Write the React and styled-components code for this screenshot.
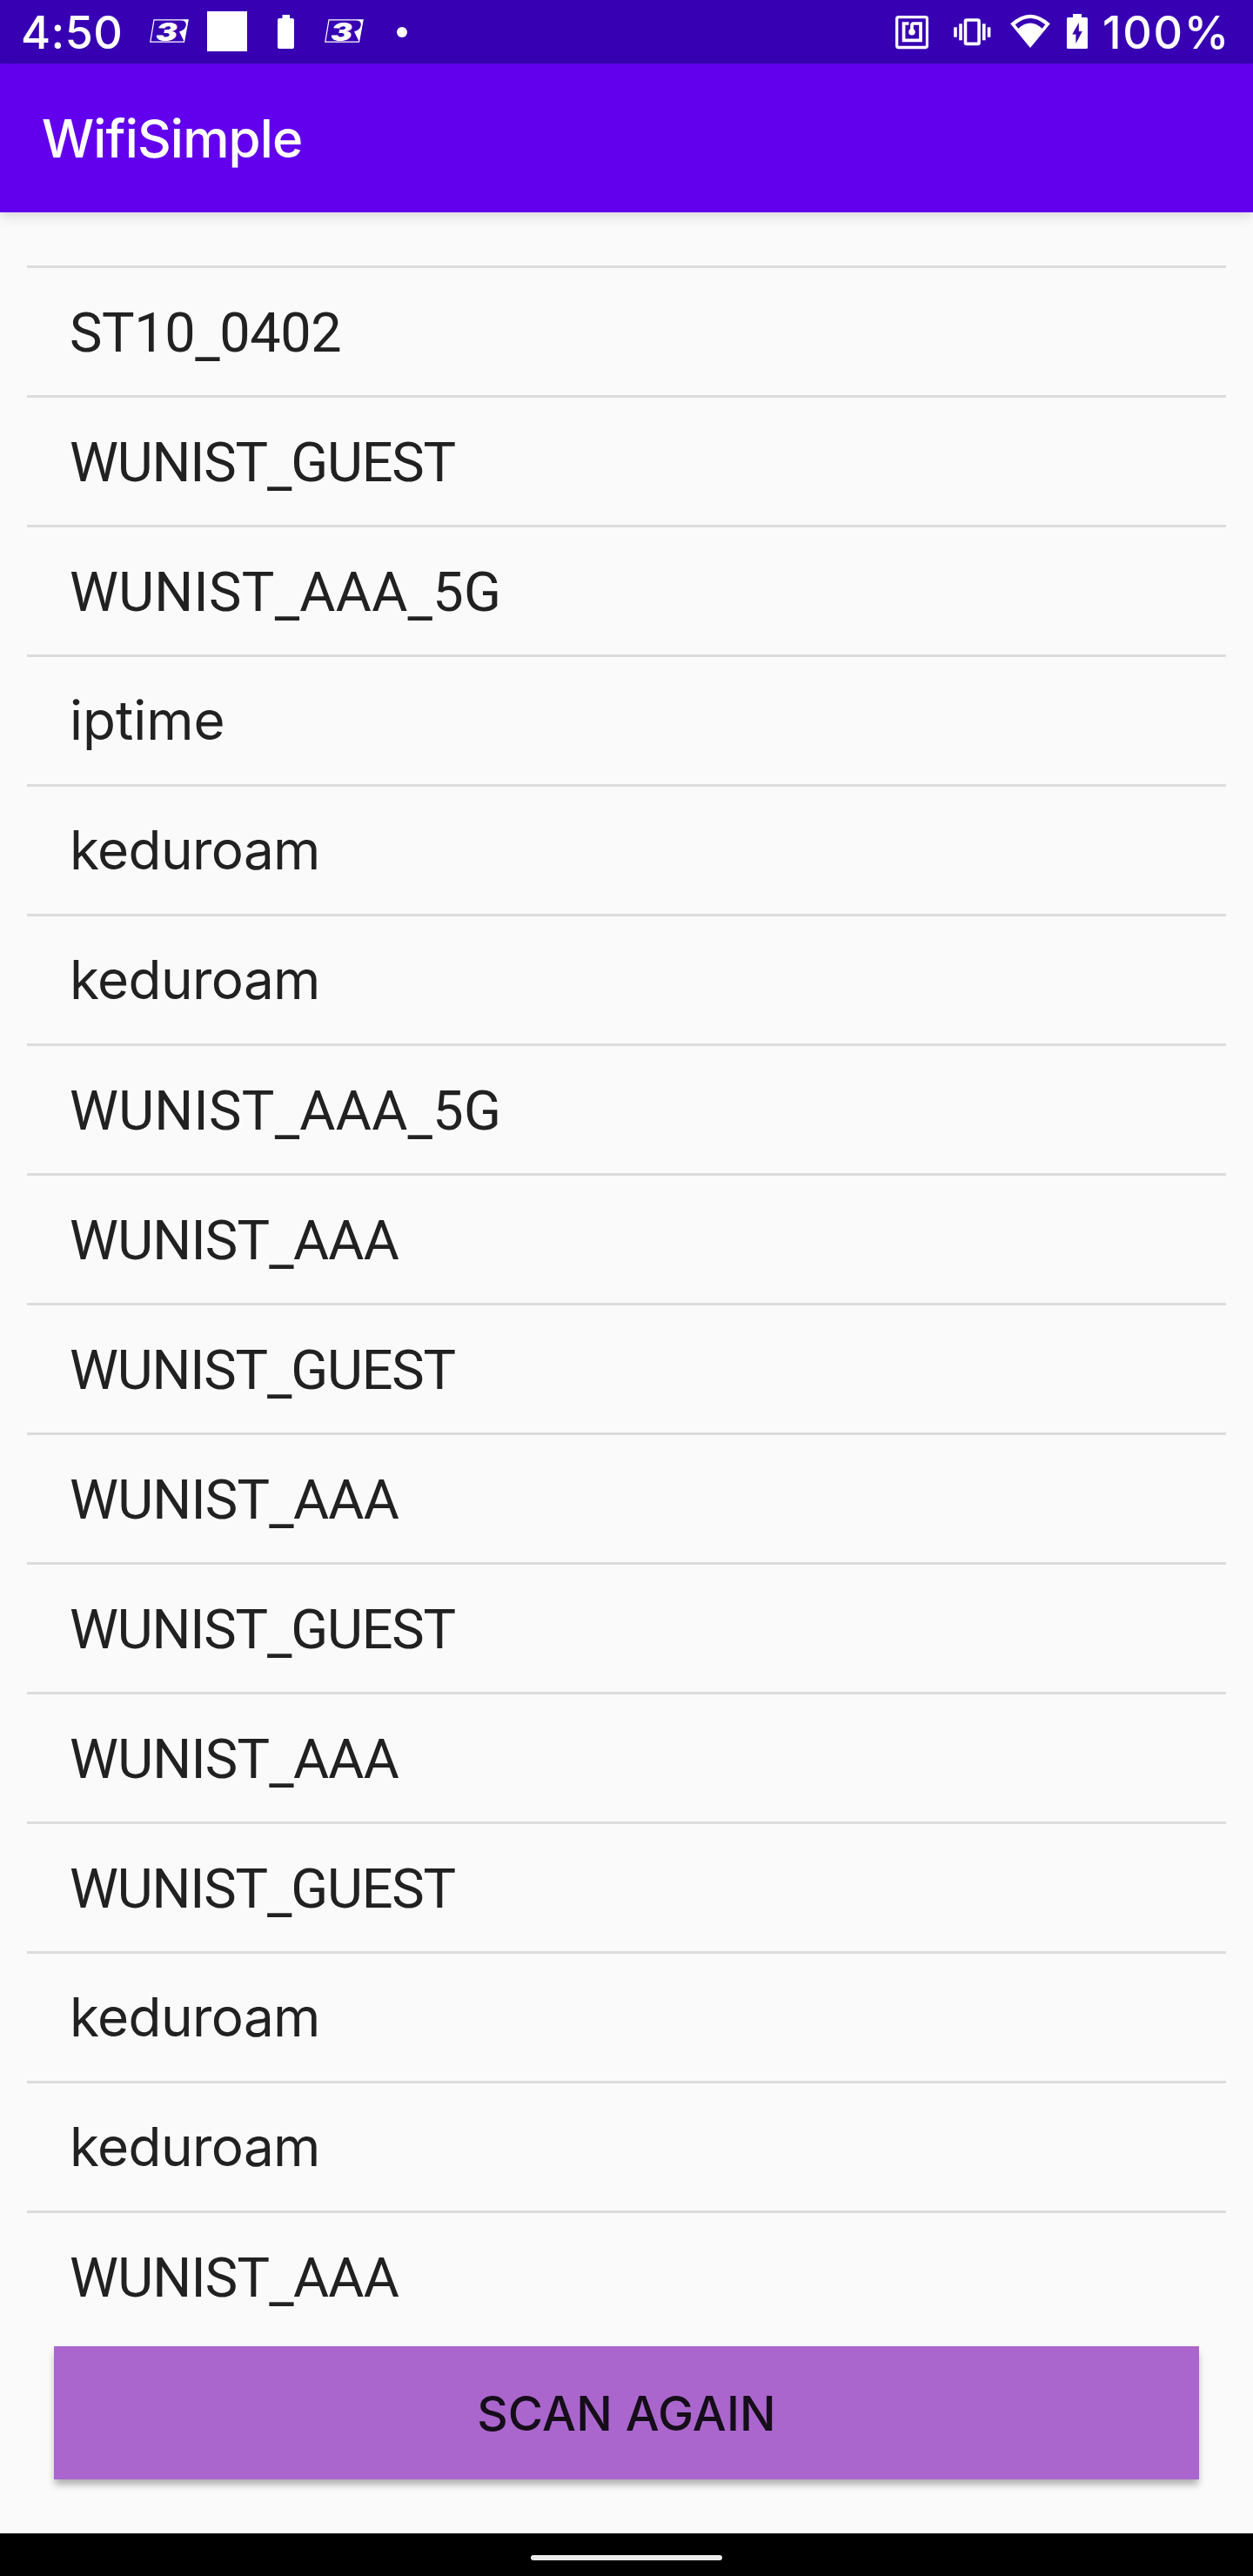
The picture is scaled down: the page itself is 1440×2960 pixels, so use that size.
import React from "react";
import styled, { createGlobalStyle } from "styled-components";

const GlobalStyle = createGlobalStyle`
  * { box-sizing: border-box; }
  body {
    margin: 0;
    background: #fafafa;
    font-family: Inter, "Noto Sans", sans-serif;
  }
`;

const Screen = styled.div`
  display: flex;
  flex-direction: column;
  width: 1440px;
  height: 2960px;
  background: #fafafa;
  overflow: hidden;
`;

const StatusBar = styled.header`
  display: flex;
  justify-content: space-between;
  flex: none;
  height: 73px;
  padding: 0 30px 0 24px;
  background: #3700b3;
  color: #fff;
`;

const StatusGroup = styled.div`
  display: flex;
  align-items: center;
`;

const StatusText = styled.span`
  width: ${(p) => p.$width}px;
  padding-top: 3px;
  font-size: 52px;
  font-weight: 500;
  line-height: 70px;
  letter-spacing: ${(p) => p.$spacing}px;
  white-space: nowrap;
`;

const StatusIcon = styled.svg`
  display: block;
  flex: none;
  height: 73px;
  margin-right: ${(p) => p.$gap}px;
`;

const NotificationSquare = styled.span`
  width: 46px;
  height: 46px;
  margin: 0 35px 1px 0;
  background: #fff;
`;

const MoreDot = styled.span`
  width: 12px;
  height: 12px;
  border-radius: 50%;
  background: #fff;
`;

const AppBar = styled.div`
  display: flex;
  align-items: center;
  flex: none;
  height: 171px;
  padding-left: 48px;
  background: #6200ee;
  box-shadow: 0 3px 14px rgba(0, 0, 0, 0.16);
`;

const Title = styled.h1`
  margin: 0;
  color: #fff;
  font-size: 60px;
  font-weight: 500;
  line-height: 1.2;
  letter-spacing: -0.85px;
`;

const NetworkList = styled.ul`
  flex: none;
  margin: 61px 31px 7px;
  padding: 0;
  list-style: none;
`;

const NetworkRow = styled.li`
  display: flex;
  align-items: center;
  height: 149px;
  padding-left: 49px;
  padding-top: ${(p) => (p.$upper ? 3 : 1)}px;
  border-top: 3px solid #dcdcdc;
  color: #212121;
  font-family: ${(p) => (p.$upper ? "Roboto" : "Inter")}, sans-serif;
  font-size: ${(p) => (p.$upper ? 63 : 62)}px;
  letter-spacing: ${(p) => p.$spacing}px;
  line-height: 1.2;
`;

const NetworkName = styled.span`
  white-space: nowrap;
`;

const Underscore = styled.span`
  line-height: 0;
  vertical-align: -6px;
`;

const ScanButton = styled.button`
  flex: none;
  height: 153px;
  margin: 0 62px;
  padding: 0;
  border: 0;
  background: #aa66cc;
  box-shadow: 0 7px 8px -1px rgba(0, 0, 0, 0.3);
  color: #150d19;
  font: 500 55px Inter, sans-serif;
  letter-spacing: 0.15px;
`;

const NavBar = styled.footer`
  display: flex;
  justify-content: center;
  align-items: flex-start;
  height: 49px;
  flex: none;
  margin-top: auto;
  padding-top: 25px;
  background: #000;
`;

const HomePill = styled.span`
  width: 220px;
  height: 6px;
  border-radius: 3px;
  background: #ebebeb;
`;

const SPACING = {
  ST10_0402: -0.4,
  WUNIST_GUEST: -1.15,
  WUNIST_AAA_5G: 0.3,
  WUNIST_AAA: -0.75,
  iptime: 0,
  keduroam: -0.6,
};

const NETWORKS = [
  "ST10_0402",
  "WUNIST_GUEST",
  "WUNIST_AAA_5G",
  "iptime",
  "keduroam",
  "keduroam",
  "WUNIST_AAA_5G",
  "WUNIST_AAA",
  "WUNIST_GUEST",
  "WUNIST_AAA",
  "WUNIST_GUEST",
  "WUNIST_AAA",
  "WUNIST_GUEST",
  "keduroam",
  "keduroam",
  "WUNIST_AAA",
];

function ThreeIcon({ gap }) {
  return (
    <StatusIcon $gap={gap} width="45" viewBox="172 0 45 73">
      <path d="M177 22.9H216.1L211.5 48.2H172.8Z" fill="none" stroke="#fff" strokeWidth="1.2" />
      <path d="M208 23C214 24 215.5 28 212 33Q210 35.5 206 36.2L211.5 47.5L216.3 22.8Z" fill="#fff" />
      <text
        x="179"
        y="46.8"
        fill="#fff"
        fontFamily="Inter, sans-serif"
        fontSize="28.5"
        fontWeight="900"
        fontStyle="italic"
        textLength="25"
        lengthAdjust="spacingAndGlyphs"
      >
        3
      </text>
    </StatusIcon>
  );
}

function BatteryIcon() {
  return (
    <StatusIcon $gap={35} width="19" viewBox="319 0 19 73">
      <path d="M324.5 17H333V21H336Q338 21 338 23V54Q338 56 336 56H321Q319 56 319 54V23Q319 21 321 21H324.5Z" fill="#fff" />
    </StatusIcon>
  );
}

function NfcIcon() {
  return (
    <StatusIcon $gap={29} width="38" viewBox="1029 0 38 73" fill="none" stroke="#fff">
      <rect x="1030.7" y="19.7" width="34.8" height="34.8" rx="2" strokeWidth="3.3" />
      <path d="M1044.5 27H1038.6V46.4H1058V27H1050Q1048 27 1048 29V36" strokeWidth="3.7" />
      <circle cx="1048" cy="36.8" r="3.8" fill="#fff" stroke="none" />
    </StatusIcon>
  );
}

function VibrateIcon() {
  return (
    <StatusIcon $gap={22} width="43" viewBox="1096 0 43 73" fill="#fff">
      <rect x="1109.5" y="23" width="15.6" height="27.4" rx="1.5" fill="none" stroke="#fff" strokeWidth="3.6" />
      <rect x="1102.2" y="27.3" width="3.6" height="19" />
      <rect x="1096.2" y="31.3" width="3.6" height="11.4" />
      <rect x="1129" y="27.3" width="3.6" height="19" />
      <rect x="1134.8" y="31.3" width="3.6" height="11.4" />
    </StatusIcon>
  );
}

function WifiIcon() {
  return (
    <StatusIcon $gap={19} width="46" viewBox="1161 0 46 73">
      <path
        fill="#fff"
        fillRule="evenodd"
        d="M1161.2 27.3Q1184 6 1206.8 27.3L1184 55ZM1166.7 28.3L1170.3 32.7Q1184 20.5 1197.7 32.7L1201.3 28.3Q1184 13.5 1166.7 28.3Z"
      />
    </StatusIcon>
  );
}

function ChargingIcon() {
  return (
    <StatusIcon $gap={17} width="24" viewBox="1226 0 24 73">
      <path
        fill="#fff"
        fillRule="evenodd"
        d="M1233 16H1243V20H1248.5Q1250 20 1250 21.5V54.5Q1250 56 1248.5 56H1227.5Q1226 56 1226 54.5V21.5Q1226 20 1227.5 20H1233ZM1239.8 26L1232.3 39.4H1236.4V50L1243.8 36H1239.8Z"
      />
    </StatusIcon>
  );
}

export default function App() {
  return (
    <>
      <GlobalStyle />
      <Screen>
        <StatusBar>
          <StatusGroup>
            <StatusText $width={148} $spacing={0.4}>4:50</StatusText>
            <ThreeIcon gap={21} />
            <NotificationSquare />
            <BatteryIcon />
            <ThreeIcon gap={38} />
            <MoreDot />
          </StatusGroup>
          <StatusGroup>
            <NfcIcon />
            <VibrateIcon />
            <WifiIcon />
            <ChargingIcon />
            <StatusText $width={143} $spacing={1.7}>100%</StatusText>
          </StatusGroup>
        </StatusBar>
        <AppBar>
          <Title>WifiSimple</Title>
        </AppBar>
        <NetworkList>
          {NETWORKS.map((name, i) => (
            <NetworkRow key={i} $upper={name === name.toUpperCase()} $spacing={SPACING[name]}>
              <NetworkName>
                {name.split(/(_)/).map((part, j) =>
                  part === "_" ? <Underscore key={j}>_</Underscore> : part
                )}
              </NetworkName>
            </NetworkRow>
          ))}
        </NetworkList>
        <ScanButton>SCAN AGAIN</ScanButton>
        <NavBar>
          <HomePill />
        </NavBar>
      </Screen>
    </>
  );
}
